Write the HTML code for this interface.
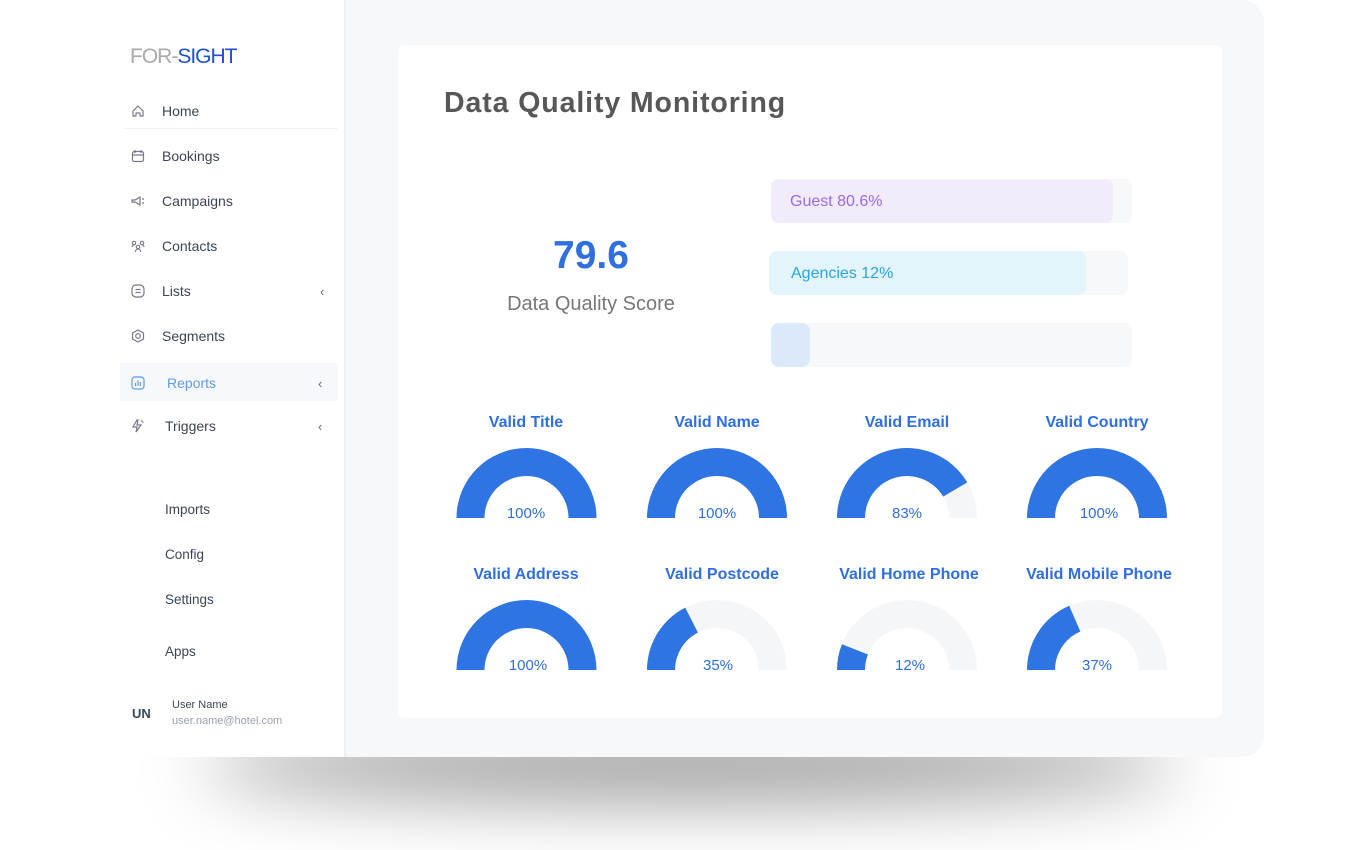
<!DOCTYPE html>
<html><head><meta charset="utf-8"><style>
*{margin:0;padding:0;box-sizing:border-box}
body{width:1361px;height:850px;background:#fff;position:relative;overflow:hidden;font-family:"Liberation Sans",sans-serif}
.a{position:absolute;white-space:nowrap}
.shadow{position:absolute;left:200px;top:730px;width:980px;height:70px;background:rgba(0,0,0,.4);filter:blur(35px);border-radius:50%}
.panel{position:absolute;left:346px;top:0;width:918px;height:757px;background:#f6f8fa;border-radius:0 22px 22px 0}
.side{position:absolute;left:0;top:0;width:346px;height:757px;background:#fff;border-right:2px solid #eef0f3}
.card{position:absolute;left:398px;top:45px;width:824px;height:673px;background:#fff;border-radius:7px}
.nav{font-size:14px;color:#3c4556}
.ic{position:absolute;left:131px;width:14px;height:14px}
.track{position:absolute;height:44px;background:#f7f8fa;border-radius:8px}
.fill{position:absolute;left:0;top:0;height:44px;border-radius:8px;font-size:16px;line-height:46px;padding-left:19px}
.gt{font-size:16px;font-weight:bold;color:#2f6fdf;text-align:center;width:200px}
.pc{font-size:15px;color:#2f6fdf;text-align:center;width:100px}
</style></head><body>
<div class="shadow"></div>
<div class="panel"></div>
<div class="side"></div>
<div class="a" style="left:130px;top:45px;font-size:21px;letter-spacing:-1px"><span style="color:#aaa;font-weight:300">FOR-</span><span style="color:#1f4fd6">SIGHT</span></div>

<div style="position:absolute;left:124px;top:128px;width:214px;height:1px;background:#f1f2f4"></div>
<div style="position:absolute;left:120px;top:363px;width:218px;height:38px;background:#f6f8fb"></div>

<svg class="ic" style="top:104px" viewBox="0 0 14 14" fill="none" stroke="#778" stroke-width="1.2"><path d="M2 7 L7 2 L12 7 V12 H9 V9 H5 V12 H2 Z" stroke-linejoin="round"/></svg>
<div class="a nav" style="left:162px;top:103px">Home</div>
<svg class="ic" style="top:149px" viewBox="0 0 14 14" fill="none" stroke="#778" stroke-width="1.2"><rect x="1.5" y="2.5" width="11" height="10" rx="2"/><path d="M4 1v3M10 1v3M1.5 6h11"/></svg>
<div class="a nav" style="left:162px;top:148px">Bookings</div>
<svg class="ic" style="top:194px" viewBox="0 0 14 14" fill="none" stroke="#778" stroke-width="1.2"><path d="M1 6h3l5-3v8l-5-3H1z"/><path d="M11 5h2M11 9h2"/></svg>
<div class="a nav" style="left:162px;top:193px">Campaigns</div>
<svg class="ic" style="top:239px" viewBox="0 0 14 14" fill="none" stroke="#778" stroke-width="1.1"><circle cx="3" cy="4" r="1.7"/><circle cx="11" cy="4" r="1.7"/><circle cx="7" cy="8" r="1.7"/><path d="M1 8c0-1 1-2 2-2M13 8c0-1-1-2-2-2M4.5 13c0-2 1-3 2.5-3s2.5 1 2.5 3"/></svg>
<div class="a nav" style="left:162px;top:238px">Contacts</div>
<svg class="ic" style="top:284px" viewBox="0 0 14 14" fill="none" stroke="#778" stroke-width="1.2"><rect x="1" y="1" width="12" height="12" rx="4"/><path d="M4.5 5.5h5M4.5 8.5h5"/></svg>
<div class="a nav" style="left:162px;top:283px">Lists</div>
<div class="a" style="left:320px;top:284px;font-size:13px;color:#667">‹</div>
<svg class="ic" style="top:329px" viewBox="0 0 14 14" fill="none" stroke="#778" stroke-width="1.2"><path d="M7 1l5.5 3v6L7 13 1.5 10V4z"/><circle cx="7" cy="7" r="2.3"/></svg>
<div class="a nav" style="left:162px;top:328px">Segments</div>
<svg class="ic" style="top:376px" viewBox="0 0 14 14" fill="none" stroke="#5b9cf0" stroke-width="1.2"><rect x="1" y="1" width="12" height="12" rx="3"/><path d="M4.5 10V7M7 10V4.5M9.5 10V6"/></svg>
<div class="a nav" style="left:167px;top:375px;color:#5b9cf0">Reports</div>
<div class="a" style="left:318px;top:376px;font-size:13px;color:#667">‹</div>
<svg class="ic" style="top:419px" viewBox="0 0 14 14" fill="none" stroke="#778" stroke-width="1.2"><path d="M6 1L2 8h4l-1 5 5-7H6l1-5z"/><path d="M11 1v2M12.5 3.5h-1"/></svg>
<div class="a nav" style="left:165px;top:418px">Triggers</div>
<div class="a" style="left:318px;top:419px;font-size:13px;color:#667">‹</div>

<div class="a nav" style="left:165px;top:502px;font-size:13.5px">Imports</div>
<div class="a nav" style="left:165px;top:547px;font-size:13.5px">Config</div>
<div class="a nav" style="left:165px;top:592px;font-size:13.5px">Settings</div>
<div class="a nav" style="left:165px;top:644px;font-size:13.5px">Apps</div>
<div class="a" style="left:132px;top:706px;font-size:13px;font-weight:bold;color:#3c4556">UN</div>
<div class="a" style="left:172px;top:699px;font-size:11px;color:#3c4556">User Name</div>
<div class="a" style="left:172px;top:715px;font-size:11px;color:#9aa0ac">user.name@hotel.com</div>

<div class="card"></div>
<div class="a" style="left:444px;top:87px;font-size:28.5px;font-weight:bold;color:#575757;letter-spacing:0.9px">Data Quality Monitoring</div>
<div class="a" style="left:491px;top:234px;width:200px;text-align:center;font-size:39px;font-weight:bold;color:#2f6fdf">79.6</div>
<div class="a" style="left:491px;top:293px;width:200px;text-align:center;font-size:20px;color:#777">Data Quality Score</div>

<div class="track" style="left:771px;top:179px;width:361px"><div class="fill" style="width:342px;background:#f1ebfc;color:#9b6ae8">Guest 80.6%</div></div>
<div class="track" style="left:769px;top:251px;width:359px"><div class="fill" style="width:317px;background:#e3f4fb;color:#2aa5e0;padding-left:22px">Agencies 12%</div></div>
<div class="track" style="left:771px;top:323px;width:361px"><div class="fill" style="width:39px;background:#dce9fb"></div></div>

<div class="a gt" style="left:426px;top:414px">Valid Title</div>
<div class="a gt" style="left:617px;top:414px">Valid Name</div>
<div class="a gt" style="left:807px;top:414px">Valid Email</div>
<div class="a gt" style="left:997px;top:414px">Valid Country</div>
<div class="a gt" style="left:426px;top:566px">Valid Address</div>
<div class="a gt" style="left:622px;top:566px">Valid Postcode</div>
<div class="a gt" style="left:809px;top:566px">Valid Home Phone</div>
<div class="a gt" style="left:999px;top:566px">Valid Mobile Phone</div>

<svg class="a" style="left:0;top:0" width="1361" height="850">
<defs><path id="bg" d="M-70 0A70 70 0 0 1 70 0L42 0A42 42 0 0 0 -42 0Z"/></defs>
<g fill="#f5f6f8">
<use href="#bg" transform="translate(526.5,518)"/><use href="#bg" transform="translate(717,518)"/><use href="#bg" transform="translate(907,518)"/><use href="#bg" transform="translate(1097,518)"/>
<use href="#bg" transform="translate(526.5,670)"/><use href="#bg" transform="translate(717,670)"/><use href="#bg" transform="translate(907,670)"/><use href="#bg" transform="translate(1097,670)"/>
</g>
<g fill="#2f74e3">
<use href="#bg" transform="translate(526.5,518)"/><use href="#bg" transform="translate(717,518)"/>
<path transform="translate(907,518)" d="M-70 0A70 70 0 0 1 60.25 -35.63L36.15 -21.38A42 42 0 0 0 -42 0Z"/>
<use href="#bg" transform="translate(1097,518)"/>
<use href="#bg" transform="translate(526.5,670)"/>
<path transform="translate(717,670)" d="M-70 0A70 70 0 0 1 -31.78 -62.37L-19.07 -37.42A42 42 0 0 0 -42 0Z"/>
<path transform="translate(907,670)" d="M-70 0A70 70 0 0 1 -65.09 -25.77L-39.05 -15.46A42 42 0 0 0 -42 0Z"/>
<path transform="translate(1097,670)" d="M-70 0A70 70 0 0 1 -27.80 -64.24L-16.68 -38.55A42 42 0 0 0 -42 0Z"/>
</g>
</svg>
<div class="a pc" style="left:476px;top:505px">100%</div>
<div class="a pc" style="left:667px;top:505px">100%</div>
<div class="a pc" style="left:857px;top:505px">83%</div>
<div class="a pc" style="left:1049px;top:505px">100%</div>
<div class="a pc" style="left:478px;top:657px">100%</div>
<div class="a pc" style="left:668px;top:657px">35%</div>
<div class="a pc" style="left:860px;top:657px">12%</div>
<div class="a pc" style="left:1047px;top:657px">37%</div>
</body></html>
